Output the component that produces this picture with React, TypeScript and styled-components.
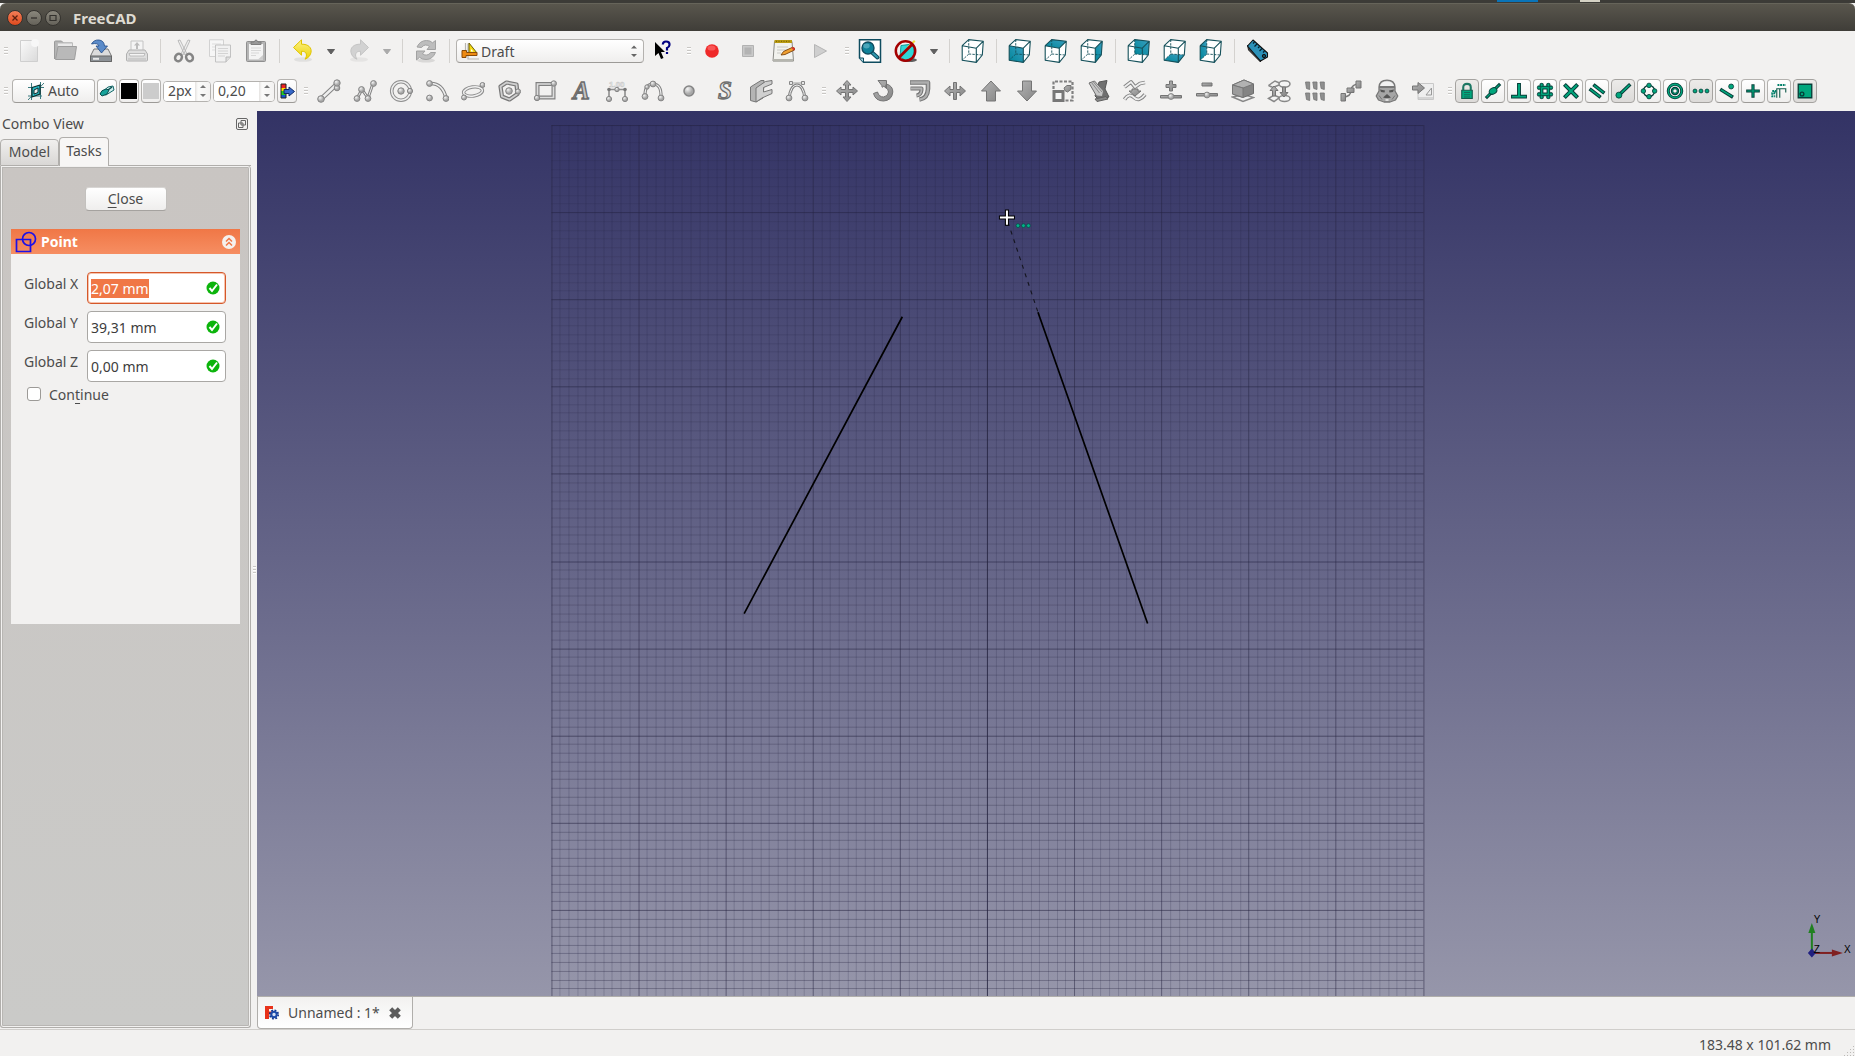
import React, { useEffect, useRef, useState } from 'react';
import styled, { createGlobalStyle, css } from 'styled-components';

const GlobalStyle = createGlobalStyle`
  * { box-sizing: border-box; }
  body { margin: 0; background: #f2f1f0; }
  body, button, input, select { font-family: "Noto Sans", "Open Sans", sans-serif; font-size: 14px; color: #4c4c4c; }
  button { padding: 0; border: 0; background: none; }
  svg { display: block; flex: none; }
`;

/* ---------- window frame ---------- */

const Window = styled.div`
  display: flex;
  flex-direction: column;
  height: 100vh;
  overflow: hidden;
`;
const DesktopStrip = styled.div`
  flex: none;
  display: flex;
  justify-content: flex-end;
  height: 3px;
  padding-right: 255px;
  background: #3c3b37;
`;
const StripMark = styled.span<{ $w: number; $c: string; $gap: number }>`
  width: ${p => p.$w}px;
  height: 2px;
  margin-right: ${p => p.$gap}px;
  background: ${p => p.$c};
`;
const TitleBar = styled.header`
  flex: none;
  display: flex;
  align-items: center;
  gap: 3px;
  height: 28px;
  padding-left: 7px;
  border-top: 1px solid #66645a;
  border-radius: 6px 6px 0 0;
  background: linear-gradient(#59564d, #3f3d38);
`;
const WindowButton = styled.button<{ $close?: boolean }>`
  display: grid;
  place-items: center;
  width: 16px;
  height: 16px;
  border: 1px solid #35332f;
  border-radius: 8px;
  background: ${p => (p.$close ? 'linear-gradient(#f37e58, #de4a1e)' : 'linear-gradient(#8a877c, #65625a)')};
`;
const Title = styled.h1`
  margin: 0 0 0 9px;
  font-size: 15px;
  line-height: 20px;
  font-weight: 700;
  color: #dfdbd2;
`;

/* ---------- toolbars ---------- */

const ToolbarRow = styled.div`
  flex: none;
  display: flex;
  align-items: center;
  gap: 3px;
  height: 40px;
`;
const Group = styled.div<{ $gap?: number; $indent?: number }>`
  display: flex;
  align-items: center;
  gap: ${p => p.$gap ?? 0}px;
  padding-left: ${p => p.$indent ?? 0}px;
`;
const Handle = styled.span`
  flex: none;
  width: 11px;
  height: 8px;
  border: solid transparent;
  border-width: 0 3px 0 4px;
  background: repeating-linear-gradient(#c9c7c4 0 1px, #fff 1px 2px, transparent 2px 3px) padding-box;
`;
const Separator = styled.span`
  width: 1px;
  height: 24px;
  margin: 0 5px;
  background: #d4d2cf;
`;
const ToolButton = styled.button`
  display: grid;
  place-items: center;
  width: 36px;
  height: 32px;
`;
const MenuArrow = styled.button`
  display: grid;
  place-items: center;
  width: 20px;
  height: 32px;
`;
const raised = css`
  border: 1px solid #b4b2af;
  border-bottom-color: #9c9a97;
  border-radius: 4px;
  background: linear-gradient(#fff, #efeeed);
`;
const PushButton = styled.button<{ $w: number; $down?: boolean }>`
  ${raised}
  display: flex;
  align-items: center;
  justify-content: center;
  gap: 4px;
  width: ${p => p.$w}px;
  height: 24px;
  line-height: 20px;
  ${p => p.$down && css`background: linear-gradient(#ecebe9, #dcdad8); border-color: #a5a3a0;`}
`;
const Swatch = styled.span<{ $c: string }>`
  width: 16px;
  height: 16px;
  background: ${p => p.$c};
`;
const WorkbenchBox = styled.label`
  ${raised}
  display: flex;
  align-items: center;
  width: 188px;
  height: 24px;
  margin-left: 1px;
  padding: 0 5px 0 4px;
`;
const WorkbenchSelect = styled.select`
  flex: 1;
  min-width: 0;
  height: 20px;
  padding: 0;
  border: 0;
  appearance: none;
  background: transparent;
  outline: 0;
`;
const SpinBox = styled.div<{ $w: number }>`
  display: flex;
  width: ${p => p.$w}px;
  height: 21px;
  border: 1px solid #b4b2af;
  border-radius: 4px;
  background: #fff;
  overflow: hidden;
`;
const SpinInput = styled.input`
  flex: 1;
  min-width: 0;
  width: 0;
  padding: 0 0 0 4px;
  border: 0;
  outline: 0;
  line-height: 18px;
`;
const Stepper = styled.div`
  display: grid;
  width: 15px;
  background: linear-gradient(90deg, #e4e2e0, #fbfbfa 3px, #f3f2f1);
`;
const StepButton = styled.button`
  display: grid;
  place-items: center;
`;

/* ---------- side panel ---------- */

const Workspace = styled.main`
  flex: 1;
  display: flex;
  min-height: 0;
`;
const Dock = styled.aside`
  flex: none;
  display: flex;
  flex-direction: column;
  width: 251px;
`;
const DockTitle = styled.div`
  display: flex;
  align-items: center;
  justify-content: space-between;
  height: 26px;
  padding: 0 3px 1px 2px;
  line-height: 20px;
`;
const Tabs = styled.div`
  display: flex;
  align-items: flex-end;
  height: 29px;
`;
const Tab = styled.button<{ $active?: boolean; $w: number }>`
  width: ${p => p.$w}px;
  height: ${p => (p.$active ? 29 : 27)}px;
  padding-bottom: 2px;
  border: 1px solid #b0aeab;
  border-bottom: ${p => (p.$active ? 0 : 1)}px solid #b0aeab;
  border-radius: 4px 4px 0 0;
  line-height: 20px;
  background: ${p => (p.$active ? '#f7f6f5' : 'linear-gradient(#f0efee, #d9d7d5)')};
`;
const TabRest = styled.span`
  flex: 1;
  border-bottom: 1px solid #b0aeab;
`;
const Pane = styled.section`
  flex: 1;
  margin-bottom: 1px;
  padding: 19px 8px;
  border: 1px solid #b0aeab;
  border-top: 0;
  border-radius: 0 3px 3px 3px;
  box-shadow: inset 0 0 0 1px #f2f1f0, inset 0 0 0 2px #b8b6b3;
  background: linear-gradient(#c9c5c2, #cacac8);
`;
const CloseRow = styled.div`
  display: flex;
  justify-content: center;
  padding: 2px 0 18px;
`;
const CloseButton = styled(PushButton)`
  display: block;
  border-color: #d8d6d4 #c3c1be #a5a29f;
`;
const Mnemonic = styled.u`
  text-underline-offset: 3px;
`;
const TaskBox = styled.div`
  margin: 0 2px;
  height: 395px;
  background: #f2f1f0;
`;
const TaskHeader = styled.div`
  display: flex;
  align-items: center;
  gap: 4px;
  height: 25px;
  padding: 0 4px;
  background: linear-gradient(#f07746, #f68e62);
`;
const TaskTitle = styled.h2`
  flex: 1;
  margin: 0;
  font-size: 14px;
  line-height: 20px;
  color: #fff;
`;
const TaskBody = styled.form`
  display: grid;
  gap: 7px;
  padding: 18px 14px 0 12px;
`;
const Field = styled.div`
  display: flex;
  justify-content: space-between;
`;
const FieldLabel = styled.label`
  line-height: 20px;
  padding: 2px 1px;
`;
const FieldBox = styled.div<{ $focus?: boolean }>`
  display: flex;
  align-items: center;
  width: 139px;
  height: 32px;
  padding: 0 5px 0 3px;
  border: 1px solid #a9a7a4;
  border-radius: 4px;
  background: #fff;
  ${p => p.$focus && css`border-color: #d5582a; box-shadow: inset 0 0 0 1px #f6c3ad;`}
`;
const FieldInput = styled.input`
  flex: 1;
  min-width: 0;
  padding: 0;
  border: 0;
  outline: 0;
  background: transparent;
  color: #3c3c3c;
  &::selection { background: #f07746; color: #fff; }
`;
const CheckRow = styled.label`
  display: flex;
  align-items: center;
  gap: 8px;
  height: 20px;
  margin-top: -5px;
  padding-left: 4px;
`;
const Check = styled.input`
  appearance: none;
  width: 14px;
  height: 14px;
  margin: 0;
  border: 1px solid #9c9a97;
  border-radius: 3px;
  background: #fff;
`;
const Splitter = styled.div`
  flex: none;
  display: grid;
  place-items: center;
  width: 6px;
`;
const SplitterGrip = styled.span`
  width: 3px;
  height: 8px;
  background: repeating-linear-gradient(#c9c7c4 0 1px, #fff 1px 2px, transparent 2px 3px);
`;

/* ---------- document area ---------- */

const DocumentArea = styled.section`
  flex: 1;
  display: flex;
  flex-direction: column;
  min-width: 0;
`;
const Viewport = styled.div`
  flex: 1;
  min-height: 0;
  border-bottom: 1px solid #b0aeab;
  background: linear-gradient(#333365, #9696aa);
`;
const DocTabs = styled.div`
  display: flex;
  height: 32px;
`;
const DocTab = styled.div`
  display: flex;
  align-items: center;
  width: 156px;
  padding: 0 10px 0 7px;
  border: 1px solid #b0aeab;
  border-top: 0;
  border-radius: 0 0 4px 4px;
  background: linear-gradient(#f2f1f0, #fff);
`;
const DocName = styled.button`
  flex: 1;
  padding-left: 9px;
  text-align: left;
  line-height: 20px;
`;
const StatusBar = styled.footer`
  flex: none;
  display: flex;
  align-items: center;
  justify-content: flex-end;
  gap: 12px;
  height: 27px;
  padding: 4px 1px 0 0;
  border-top: 1px solid #d0cecb;
  line-height: 20px;
`;
const SizeGrip = styled.span`
  align-self: flex-end;
  width: 11px;
  height: 11px;
  background: radial-gradient(#bcbab7 1px, transparent 1px) 0 0 / 3px 3px;
  clip-path: polygon(100% 0, 100% 100%, 0 100%);
`;

/* ---------- icon helpers ---------- */

type P = { children?: React.ReactNode; size?: number };
const Icon = ({ children, size = 24 }: P) => (
  <svg width={size} height={size} viewBox="0 0 24 24" fill="none" aria-hidden="true">{children}</svg>
);
const Glyph = styled.svg`
  overflow: visible;
`;
const Ball = ({ x, y, r = 2.9 }: { x: number; y: number; r?: number }) => (
  <circle cx={x} cy={y} r={r} fill="url(#ball)" stroke="#858585" strokeWidth="1" />
);
const Tube = ({ d, w = 3.6 }: { d: string; w?: number }) => (
  <>
    <path d={d} stroke="#848484" strokeWidth={w} strokeLinejoin="round" />
    <path d={d} stroke="#efefef" strokeWidth={w - 2} strokeLinejoin="round" />
  </>
);
const Solid = ({ d }: { d: string }) => <path d={d} fill="url(#steel)" stroke="#747474" strokeWidth="1" strokeLinejoin="round" />;

const Defs = () => (
  <svg width="0" height="0" style={{ position: 'absolute' }} aria-hidden="true">
    <defs>
      <radialGradient id="ball" cx=".35" cy=".3"><stop offset="0" stopColor="#f4f4f4" /><stop offset="1" stopColor="#a8a8a8" /></radialGradient>
      <linearGradient id="steel" x1="0" y1="0" x2="1" y2="1"><stop offset="0" stopColor="#b4b4b4" /><stop offset="1" stopColor="#858585" /></linearGradient>
      <linearGradient id="pale" x1="0" y1="0" x2="1" y2="1"><stop offset="0" stopColor="#fafafa" /><stop offset="1" stopColor="#dadada" /></linearGradient>
      <linearGradient id="teal" x1="1" y1="0" x2="0" y2="1"><stop offset="0" stopColor="#3a9fc0" /><stop offset="1" stopColor="#00869a" /></linearGradient>
      <linearGradient id="yellow" x1="0" y1="0" x2="0" y2="1"><stop offset="0" stopColor="#fbf08a" /><stop offset="1" stopColor="#edd400" /></linearGradient>
    </defs>
  </svg>
);

const A = '1.2,6.7', B = '15.3,9.2', C = '22.3,2.2', D = '7.7,.6', E = '1.2,21.2', F = '15.3,23.4', G = '21.3,16', H = '7.8,15';
const FACES = {
  front: [A, B, F, E], top: [A, B, C, D], right: [B, C, G, F],
  rear: [D, C, G, H], bottom: [E, F, G, H], left: [A, D, H, E],
};
const Cube = ({ face }: { face?: keyof typeof FACES }) => (
  <Icon>
    <path d={`M${A}L${B}L${F}L${E}ZM${A}L${D}L${C}L${G}L${F}L${B}Z`} fill="#fff" />
    {face && <path d={`M${FACES[face].join('L')}Z`} fill="url(#teal)" />}
    <path d={`M${D}L${H}L${E}M${H}L${G}`} stroke="#15505a" strokeWidth=".9" strokeDasharray="2.4 1.2" />
    <path d={`M${A}L${B}L${F}L${E}ZM${A}L${D}L${C}L${G}L${F}M${B}L${C}`} stroke="#15505a" strokeWidth="1.1" strokeLinejoin="round" />
  </Icon>
);

const Curved = ({ c, s }: { c: string; s: string }) => (
  <Icon>
    <ellipse cx="12" cy="20.5" rx="9" ry="2.3" fill="#000" opacity=".07" />
    <path d="M2.500 8.500L10.500 .8V5.200C17.500 5 21 9 20 13.500C19.300 17 17 19 14 20.200C16.500 16.500 16 12.200 10.500 12.200V16.200Z" fill={c} stroke={s} strokeLinejoin="round" />
  </Icon>
);
const Triangle = ({ c }: { c: string }) => (
  <svg width="10" height="8" viewBox="0 0 10 8" aria-hidden="true"><path d="M1.500 2.500H8.500L5 7Z" fill={c} stroke={c} strokeLinejoin="round" /></svg>
);
const Steps = () => (
  <svg width="8" height="14" viewBox="0 0 8 14" aria-hidden="true"><path d="M1 4.500L4 1.500L7 4.500ZM1 10L4 13L7 10Z" fill="#666" /></svg>
);

const icons: Record<string, React.ReactNode> = {
  New: <Icon><path d="M3.500 1.500H20.500V22.500H3.500Z" fill="url(#pale)" stroke="#cfcfcf" /><circle cx="18" cy="4" r="4" fill="#f7f7f7" /></Icon>,
  Open: <Icon><path d="M1.500 20V3Q1.500 2 2.500 2H8.500L10.500 4H19.500V12" fill="#b5b5b5" stroke="#9a9a9a" /><path d="M4.500 4H19.500V14H4.500Z" fill="#e9e9e9" stroke="#bbb" /><path d="M5 7.500H23.500L21.500 20.500H2.500Z" fill="#b9b9b9" stroke="#9d9d9d" strokeLinejoin="round" /></Icon>,
  Save: <Icon><path d="M5 10H19L22.500 17V22.500H1.500V17Z" fill="#dcdcdc" stroke="#777" strokeLinejoin="round" /><path d="M1.500 17H22.500V22.500H1.500Z" fill="#8d9297" stroke="#666" /><path d="M4 19.800H10" stroke="#e8e8e8" strokeWidth="2" /><path d="M2.500 5Q5 .5 10 1Q15 1.500 15.500 7H18.500L12.500 14L7 7H10Q9 3.500 2.500 5Z" fill="#5b8bc9" stroke="#204a87" strokeWidth=".8" /></Icon>,
  Print: <Icon><path d="M6 2H18V13H6Z" fill="#f4f4f4" stroke="#c4c4c4" /><path d="M12 3L15 6.500H13V10H11V6.500H9Z" fill="#bbb" /><path d="M4 11H20L22.500 15V21Q22.500 22 21.500 22H2.500Q1.500 22 1.500 21V15Z" fill="#dedede" stroke="#b0b0b0" /><path d="M4 14.500H20L19 17H5Z" fill="#f5f5f5" stroke="#bbb" /><path d="M3 20H21" stroke="#bbb" /></Icon>,
  Cut: <Icon><path d="M6 1.500L8 1L15 15L12.500 15.500ZM18 1.500L16 1L9 15L11.500 15.500Z" fill="#eee" stroke="#adadad" strokeWidth=".8" /><ellipse cx="6.500" cy="18.500" rx="3.300" ry="3.800" stroke="#858585" strokeWidth="2.500" transform="rotate(30 6.500 18.500)" /><ellipse cx="17.500" cy="18.500" rx="3.300" ry="3.800" stroke="#858585" strokeWidth="2.500" transform="rotate(-30 17.500 18.500)" /></Icon>,
  Copy: <Icon><path d="M1.500 .8H15.500V17.500H1.500Z" fill="#f6f6f6" stroke="#d2d2d2" /><path d="M4 5H13M4 8H13M4 11H8" stroke="#ddd" /><path d="M7.500 6H22.500V18L18 23H7.500Z" fill="#f1f1f1" stroke="#c2c2c2" /><path d="M10 9.500H20M10 12H20M10 14.500H20M10 17H17" stroke="#d3d3d3" /><path d="M22.500 18H18V23" fill="#ddd" stroke="#b8b8b8" /></Icon>,
  Paste: <Icon><rect x="2.500" y="2.500" width="19" height="20" rx="1" fill="#b5b5b5" stroke="#8f8f8f" /><path d="M5 5H19V20.500H5Z" fill="#f4f4f4" /><path d="M7 9H17M7 11.500H17M7 14H15M7 16.500H12" stroke="#d8d8d8" /><path d="M14 20.500L19 16V20.500Z" fill="#ccc" /><path d="M7 5.500V3H10Q12 -1 14 3H17V5.500Z" fill="#999" stroke="#7e7e7e" /></Icon>,
  Undo: <Curved c="url(#yellow)" s="#e0c400" />,
  Redo: <Icon><g transform="matrix(-1 0 0 1 24 0)"><ellipse cx="12" cy="20.500" rx="9" ry="2.300" fill="#000" opacity=".05" /><path d="M2.500 8.500L10.500 .8V5.200C17.500 5 21 9 20 13.500C19.300 17 17 19 14 20.200C16.500 16.500 16 12.200 10.500 12.200V16.200Z" fill="#d2d2d2" stroke="#c4c4c4" /></g></Icon>,
  Refresh: <Icon><ellipse cx="12" cy="21.500" rx="9" ry="2" fill="#000" opacity=".1" /><path d="M3 8Q6 1.500 12.500 1.500Q16.500 1.500 18.500 3.800L21.500 1.500V10.500H13L15.500 7.500Q11 4 7.500 8.500Z" fill="#bdbdbd" stroke="#a2a2a2" /><path d="M21.500 13.500Q18.500 20.500 12 20.500Q8 20.500 5.500 18.300L2.500 21V12H11L8.500 14.800Q13 18 16.800 13.500Z" fill="#bdbdbd" stroke="#a2a2a2" /></Icon>,
  "What's this?": <Icon><path d="M5 3V17L8.500 14L11 20L13.500 19L11 13H15Z" fill="#000" /><path d="M12.800 5.500Q13 2.500 16 2.500Q19.800 2.500 19.500 6Q19.300 8.200 17 9V11.500M17 13V15" stroke="#000080" strokeWidth="2.200" /></Icon>,
  Record: <Icon><circle cx="12" cy="12" r="6.800" fill="#ef2929" /><ellipse cx="11.500" cy="9" rx="4" ry="2.600" fill="#f77" opacity=".6" /></Icon>,
  Stop: <Icon><path d="M6.500 6.500H17.500V17.500H6.500Z" fill="#c9c9c9" stroke="#b2b2b2" /><path d="M8.500 8.500H15.500V15.500H8.500Z" fill="#b3b3b3" /></Icon>,
  Macros: <Icon><path d="M2.500 2.500H20L21.500 22H1Z" fill="#f2f2ee" stroke="#8a8a85" /><path d="M2.500 1H20V4H2.500Z" fill="#b99b12" /><path d="M4 2.300H19" stroke="#6e5b06" strokeDasharray="1 1.500" /><path d="M5 8H16M5 11H15M5 14H9" stroke="#c8c8c4" /><path d="M1.200 20H21.300V22.500H1.200Z" fill="#b5b5ae" /><path d="M9 16L11.500 12.500L20.500 8.300Q23.500 8.500 22.500 11L13 15.500Z" fill="#f0a030" stroke="#7c430a" strokeWidth=".9" /><path d="M20.500 8.300Q23.500 8.500 22.500 11L21.500 11.500L19.500 8.800Z" fill="#d33" /></Icon>,
  Run: <Icon><path d="M6.500 5.500L18.500 12L6.500 18.500Z" fill="#cfcfcf" stroke="#b5b5b5" strokeLinejoin="round" /></Icon>,
  'Fit all': <Icon><path d="M1.500 .8H22.500V23.200H5.500L1.500 19Z" fill="#fff" stroke="#0f4c5f" strokeWidth="1.500" /><path d="M1.500 19H5.500V23.200" fill="#9fd0dc" stroke="#0f4c5f" /><path d="M14 13.500L19.500 18.500" stroke="#0f4c5f" strokeWidth="4" strokeLinecap="round" /><path d="M14.500 14L19.300 18.300" stroke="#2f97ae" strokeWidth="2" strokeLinecap="round" /><circle cx="10" cy="9" r="6" fill="#0e8199" stroke="#0f4c5f" strokeWidth="1.400" /><ellipse cx="8.500" cy="7" rx="3.200" ry="2.400" fill="#64b6c8" opacity=".7" /></Icon>,
  'Draw style': <Icon><ellipse cx="15" cy="21" rx="8" ry="2" fill="#222" opacity=".7" /><path d="M7 6.500L15 5.500L20 8V19L12 21.500L6 18Z" fill="#2fd6d6" stroke="#139a9a" /><path d="M13 8L20 1L21.500 2.500L14 10Z" fill="#f2df3a" /><circle cx="11.500" cy="12" r="9.700" stroke="#a40000" strokeWidth="2.500" /><path d="M18.300 5.200L4.700 18.800" stroke="#a40000" strokeWidth="2.800" /></Icon>,
  Isometric: <Cube />, Front: <Cube face="front" />, Top: <Cube face="top" />, Right: <Cube face="right" />,
  Rear: <Cube face="rear" />, Bottom: <Cube face="bottom" />, Left: <Cube face="left" />,
  Measure: <Icon><path d="M1.500 6L14 19L14.500 23L2.500 11Z" fill="#444" stroke="#222" /><path d="M7 1L21.500 14V18L14.500 22L1.500 7Z" fill="#2c91b8" stroke="#111" strokeWidth="1.100" strokeLinejoin="round" /><path d="M8.500 3L7 4.500M11 5L8.500 7.500M13.500 7.500L12 9M16 9.500L13.500 12M18.500 12L17 13.500" stroke="#041f2a" strokeWidth="1.200" /><circle cx="18" cy="17" r="1.700" fill="#0f4c5f" stroke="#111" /></Icon>,

  Line: <Icon><Tube d="M4 20L20 5" w={4.500} /><Ball x={4} y={20} r={3.300} /><Ball x={20} y={9} r={2.800} /><Ball x={20} y={4} r={3.200} /></Icon>,
  Wire: <Icon><Tube d="M4 19.500L9 10.500L15 19L20 4.500" w={3} /><Ball x={4} y={19.500} /><Ball x={8.500} y={10.500} /><Ball x={15} y={19.500} /><Ball x={20.500} y={4.500} /></Icon>,
  Circle: <Icon><circle cx="12" cy="12" r="9.300" stroke="#8e8e8e" strokeWidth="3.600" /><circle cx="12" cy="12" r="9.300" stroke="#eee" strokeWidth="1.600" /><Ball x={12} y={12} r={3.200} /><Ball x={21} y={12} r={2.600} /></Icon>,
  Arc: <Icon><Tube d="M5 4.500Q17.500 4 21 19" /><Ball x={4.500} y={4.500} /><Ball x={4.500} y={19} /><Ball x={21} y={19.500} /></Icon>,
  Ellipse: <Icon><ellipse cx="12" cy="12.500" rx="9.500" ry="4.500" stroke="#8e8e8e" strokeWidth="3.400" transform="rotate(-8 12 12.500)" /><ellipse cx="12" cy="12.500" rx="9.500" ry="4.500" stroke="#f0f0f0" strokeWidth="1.500" transform="rotate(-8 12 12.500)" /><Ball x={21.500} y={6} r={2.500} /><Ball x={3} y={18.500} r={2.500} /></Icon>,
  Polygon: <Icon><path d="M9.500 3.500L19.500 5.500L20.500 15L12.500 20.500L5 17.500L3.500 7.500Z" stroke="#777" strokeWidth="4.200" strokeLinejoin="round" /><path d="M9.500 3.500L19.500 5.500L20.500 15L12.500 20.500L5 17.500L3.500 7.500Z" stroke="#cfcfcf" strokeWidth="1.800" strokeLinejoin="round" /><Ball x={12} y={12} r={3.300} /><Ball x={21} y={12.500} r={2.600} /></Icon>,
  Rectangle: <Icon><path d="M4.500 5H20.500V18.500H4.500Z" stroke="#808080" strokeWidth="4" /><path d="M4.500 5H20.500V18.500H4.500Z" stroke="#ddd" strokeWidth="1.700" /><Ball x={20.800} y={4.500} r={2.700} /><Ball x={4} y={19} r={2.700} /></Icon>,
  Text: <Glyph width="24" height="24" viewBox="0 0 24 24" aria-hidden="true"><text x="4" y="20" fontFamily="Liberation Serif, serif" fontStyle="italic" fontWeight="700" fontSize="25" fill="#c4c4c4" stroke="#6b6b6b" strokeWidth="1.300">A</text></Glyph>,
  Dimension: <Icon><text x="4" y="8" fontFamily="Liberation Sans, sans-serif" fontWeight="700" fontSize="8" fill="#f8f8f8" stroke="#c2c2c2" strokeWidth=".5">1.00</text><path d="M4 10.500V19M20 10.500V19M4 10.500H20" stroke="#8e8e8e" strokeWidth="1.600" /><Ball x={12} y={10.500} r={2.200} /><Ball x={4} y={20} r={2.600} /><Ball x={20} y={20} r={2.600} /><circle cx="4" cy="10.500" r="1.800" fill="#777" /><circle cx="20" cy="10.500" r="1.800" fill="#777" /></Icon>,
  BSpline: <Icon><Tube d="M4 18Q3.500 5 12 5Q20.500 5 20 18" w={3.200} /><Ball x={12} y={5} /><Ball x={4} y={17.500} /><Ball x={20} y={19} /><Ball x={6} y={8} r={2.200} /></Icon>,
  Point: <Icon><circle cx="12" cy="12" r="5" fill="url(#ball)" stroke="#858585" strokeWidth="1.500" /></Icon>,
  'Shape string': <Glyph width="24" height="24" viewBox="0 0 24 24" aria-hidden="true"><text x="5" y="20" fontFamily="Liberation Serif, serif" fontStyle="italic" fontSize="25" fontWeight="700" fill="#e4e4e4" stroke="#6f6f6f" strokeWidth="1.300">S</text></Glyph>,
  Facebinder: <Icon><path d="M1.500 8L12 1.500H15V5L14 19L7 23L1.500 21.500Z" fill="#b4b4b4" stroke="#777" strokeLinejoin="round" /><path d="M7 9L16.500 2.500L23 1.500V5L14.500 8.500V13L23 10.500V14.500L13 19L7 23Z" fill="#cfcfcf" stroke="#777" strokeLinejoin="round" /></Icon>,
  Bezier: <Icon><path d="M4 4H20" stroke="#bbb" strokeWidth="1.500" /><Tube d="M4 19Q6 6 12 6Q18 6 20 19" w={3} /><path d="M4.500 2.500H7.500V5.500H4.500ZM16.500 2.500H19.500V5.500H16.500Z" fill="#e6e6e6" stroke="#888" /><Ball x={4} y={19} /><Ball x={20} y={19} /></Icon>,

  Move: <Icon><Solid d="M12 1.500L16 6H13.500V10.500H18V8L22.500 12L18 16V13.500H13.500V18H16L12 22.500L8 18H10.500V13.500H6V16L1.500 12L6 8V10.500H10.500V6H8Z" /></Icon>,
  Rotate: <Icon><Solid d="M7 1.500H15.500V9.500L12.800 7.200Q10.500 9.500 11 6.800L7 1.500ZM15.500 5Q22 7 21.800 13Q21 21.500 12.500 22Q4.500 22 2.500 14.500L6.500 13Q8 18 12.500 18Q17 17.500 17.500 13Q17.500 9.500 14 8Z" /></Icon>,
  Offset: <Icon><path d="M3 3.500H21V10Q20.500 19.500 12.500 20.500" stroke="#747474" strokeWidth="4.600" strokeLinejoin="round" /><path d="M3.500 3.500H21V10Q20.500 19.500 13 20.500" stroke="#aeaeae" strokeWidth="2.400" /><path d="M3.500 9.500H14.500V11Q14 16 9.500 16.500" stroke="#747474" strokeWidth="4" strokeLinejoin="round" /><path d="M4 9.500H14.500V11Q14 16 10 16.500" stroke="#b4b4b4" strokeWidth="1.800" /></Icon>,
  Trimex: <Icon><Solid d="M1.500 12L7 7V10.500H10.500V3.500H13.500V10.500H17V7L22.500 12L17 17V13.500H13.500V20.500H10.500V13.500H7V17Z" /></Icon>,
  Upgrade: <Icon><Solid d="M12 2L21.500 12H16.500V22H7.500V12H2.500Z" /></Icon>,
  Downgrade: <Icon><Solid d="M12 22L2.500 12H7.500V2H16.500V12H21.500Z" /></Icon>,
  Scale: <Icon><path d="M2.500 10V2.500H21.500V21.500H14" stroke="#808080" strokeWidth="2.200" strokeDasharray="3 1.500" /><path d="M3 12.500H12V21.500H3Z" fill="#f5f5f5" stroke="#777" strokeWidth="3" /><Solid d="M13 9L16 6.500H20V10.500L16.500 13Q13.500 12.500 13 9Z" /></Icon>,
  Edit: <Icon><path d="M12 3L20 1.500L18 10L22 18L12 21L8 17Z" fill="#707070" stroke="#555" /><path d="M2 4L7.500 2L16.500 12L15.500 17.500L9.500 17Z" fill="#c6c6c6" stroke="#6f6f6f" strokeLinejoin="round" /><path d="M4.500 3.500L12.500 14M6 2.500L15 13" stroke="#8a8a8a" /><path d="M8 20L19 17.500L21 20L10 22.500Z" fill="#888" stroke="#606060" /></Icon>,
  'Wire to BSpline': <Icon><Tube d="M1.500 8L8 3L12 8L17 4.500L22 3.500" w={3.800} /><Tube d="M1.500 20.500Q6 13.500 11 18.500T22 15.500" w={3.800} /><Solid d="M9 10H15V12H18L12 17L6 12H9Z" /></Icon>,
  'Add point': <Icon><Solid d="M10.500 2H13.500V5.500H17V8.500H13.500V12H10.500V8.500H7V5.500H10.500Z" /><Solid d="M1.500 16.500H22.500V19H1.500Z" /><Ball x={12} y={17.500} /></Icon>,
  'Remove point': <Icon><Solid d="M7 4H17V7H7Z" /><Solid d="M1.500 14.500H22.500V17H1.500Z" /><Ball x={12} y={16} /></Icon>,
  'Shape 2D view': <Icon><path d="M1.500 18L13 15.500L22.500 18.500L12 22.500Z" fill="#eee" stroke="#888" strokeWidth="1.500" /><path d="M1.500 6L13 1L22.500 5V14.500L12 18.500L1.500 15Z" fill="#848484" stroke="#6b6b6b" /><path d="M1.500 6L13 1L22.500 5L12 9Z" fill="#b2b2b2" stroke="#777" /><path d="M1.500 6L12 9V18.500L1.500 15Z" fill="#9c9c9c" stroke="#777" /></Icon>,
  'Draft to sketch': <Icon><path d="M1.500 6.500L8 2L12.500 4" stroke="#888" strokeWidth="1.500" /><path d="M1.500 6.500L6 8.500L12 6" stroke="#888" strokeWidth="1.500" /><ellipse cx="17.500" cy="5" rx="5.500" ry="3.200" fill="#f4f4f4" stroke="#888" strokeWidth="1.500" /><path d="M1.500 19.500L7 16L12.500 18.500L7 22.500Z" fill="#f4f4f4" stroke="#888" strokeWidth="1.500" /><ellipse cx="17.500" cy="19.500" rx="5.500" ry="3" fill="#f4f4f4" stroke="#888" strokeWidth="1.500" /><Solid d="M7 7L11 11.500H8.500V17H5.500V11.500H3ZM17 18L13 13.500H15.500V8H18.500V13.500H21Z" /></Icon>,
  Array: <Icon>{[2.500, 9.800, 17.100].map(x => [3, 14].map(y => <path key={`${x}${y}`} d={`M${x} ${y}H${x + 4.200}V${y + 7.500}L${x + 1} ${y + 6.500}Z`} fill="#8f8f8f" stroke="#737373" strokeWidth=".8" />))}</Icon>,
  'Path array': <Icon><path d="M4 18Q12 18 12 11Q13 5 20 5" stroke="#777" strokeWidth="1.500" /><Solid d="M2 14.500H6.500V22H2Z" /><Solid d="M8 9H15V13.500H8Z" /><Solid d="M17 2H22V9H17Z" /></Icon>,
  Clone: <Icon><path d="M12 1.200Q19.500 1.200 20 8V12L22.800 17L20.500 21L15 23H9L3.500 21L1.200 17L4 12V8Q4.500 1.200 12 1.200Z" fill="#a6a6a6" stroke="#777" strokeWidth="1.300" strokeLinejoin="round" /><path d="M5 7Q6 2.200 12 2.200Q18 2.200 19 7Z" fill="#f2f2f2" /><path d="M4.500 8H19.500" stroke="#5f5f5f" strokeWidth="1.300" /><path d="M5 10.500L10 11.500L9.500 13.500L6 13ZM19 10.500L14 11.500L14.500 13.500L18 13ZM8 18.500L12 15L16 18.500L14 19H10Z" fill="#555" /><path d="M4 16.500L7 20.500M20 16.500L17 20.500" stroke="#777" /><path d="M10.500 21H13.500" stroke="#eee" strokeWidth="1.500" /></Icon>,
  Drawing: <Icon><path d="M7 4.500H22.500V20.500H7Z" fill="#eee" stroke="#c8c8c8" /><path d="M15 16L20.500 9V16Z" stroke="#999" /><path d="M7 19H22" stroke="#bbb" /><Solid d="M1.500 7H7V3.500L13.500 9L7 14.500V11H1.500Z" /></Icon>,
};

/* snap markers: dark outline with a green core */
const Snap = ({ d, w = 3.500 }: { d: string; w?: number }) => (
  <>
    <path d={d} stroke="#063f39" strokeWidth={w + 1.200} strokeLinecap="square" />
    <path d={d} stroke="#00a67c" strokeWidth={w - 1.400} strokeLinecap="square" />
  </>
);
const Dot = ({ x, y, r = 2.200 }: { x: number; y: number; r?: number }) => <circle cx={x} cy={y} r={r} fill="#00a67c" stroke="#063f39" strokeWidth="1.100" />;

const snaps: [string, boolean, React.ReactNode][] = [
  ['Snap lock', true, <Icon size={18}><path d="M7 11V7Q7 2.500 12 2.500Q17 2.500 17 7V11" stroke="#1c7763" strokeWidth="2.800" /><path d="M5 11H19V22H5Z" fill="#00a67c" stroke="#145c4d" strokeWidth="1.500" /><path d="M8 14H16M8 17H16M8 20H16" stroke="#146b58" strokeWidth="1.300" /></Icon>],
  ['Snap midpoint', false, <Icon size={18}><Snap d="M4 20L20 4" w={3} /><ellipse cx="12" cy="12" rx="5.500" ry="4" fill="#00a67c" stroke="#063f39" strokeWidth="1.300" transform="rotate(-30 12 12)" /></Icon>],
  ['Snap perpendicular', false, <Icon size={18}><Snap d="M12 4V17M4 19.500H20" w={4} /><path d="M12 4V19" stroke="#00a67c" strokeWidth="2.500" /></Icon>],
  ['Snap grid', false, <Icon size={18}><Snap d="M7.500 4.500V19.500M16.500 4.500V19.500M4.500 7.500H19.500M4.500 16.500H19.500" w={3.500} /><Dot x={4} y={7.500} /><Dot x={20} y={7.500} /><Dot x={4} y={16.500} /><Dot x={20} y={16.500} /><Dot x={7.500} y={4} /><Dot x={16.500} y={4} /><Dot x={7.500} y={20} /><Dot x={16.500} y={20} /></Icon>],
  ['Snap intersection', false, <Icon size={18}><Snap d="M5 5L19 19M19 5L5 19" w={4} /></Icon>],
  ['Snap parallel', false, <Icon size={18}><Snap d="M9 5L20 13.500M4 10.500L15 19" /></Icon>],
  ['Snap endpoint', true, <Icon size={18}><Snap d="M7 17L20 4.500" /><Dot x={6.500} y={17.500} r={4} /></Icon>],
  ['Snap angle', false, <Icon size={18}><circle cx="12" cy="12" r="7.500" stroke="#063f39" strokeWidth="1.800" /><Dot x={12} y={4.500} r={3} /><Dot x={12} y={19.500} r={3} /><Dot x={4.500} y={12} r={3} /><Dot x={19.500} y={12} r={3} /></Icon>],
  ['Snap center', false, <Icon size={18}><circle cx="12" cy="12" r="9" stroke="#063f39" strokeWidth="4" /><circle cx="12" cy="12" r="9" stroke="#00a67c" strokeWidth="1.700" /><circle cx="12" cy="12" r="4" stroke="#063f39" strokeWidth="3.200" /><circle cx="12" cy="12" r="3.500" stroke="#00a67c" strokeWidth="1" /></Icon>],
  ['Snap extension', true, <Icon size={18}><Dot x={4} y={12} r={2.600} /><Dot x={12} y={12} r={2.600} /><Dot x={20} y={12} r={2.600} /></Icon>],
  ['Snap near', false, <Icon size={18}><Snap d="M5 11L18 19" /><Dot x={17.500} y={6} r={3.300} /></Icon>],
  ['Snap ortho', false, <Icon size={18}><Snap d="M12 5V19M5 12H19" w={3} /></Icon>],
  ['Snap dimensions', false, <Icon size={18}><path d="M9 21V9H21V14M13 9V21" stroke="#145c4d" strokeWidth="1.500" /><path d="M10 4H21M3 12H7V15H3V19H7" stroke="#00806a" strokeWidth="2.500" strokeDasharray="2.500 1" /></Icon>],
  ['Snap working plane', true, <Icon size={18}><path d="M3 3H21V21H3Z" fill="#00a67c" stroke="#063f39" strokeWidth="1.800" /><circle cx="8" cy="16" r="2.500" stroke="#063f39" strokeWidth="1.800" /></Icon>],
];

const Tools = ({ names }: { names: string[] }) => (
  <>
    {names.map((n, i) => n === '|' ? <Separator key={i} />
      : n === 'v' || n === 'v-off' ? <MenuArrow key={i} aria-label="More"><Triangle c={n === 'v' ? '#5f5f5f' : '#aaa'} /></MenuArrow>
      : <ToolButton key={i} aria-label={n} title={n}>{icons[n]}</ToolButton>)}
  </>
);

const Spin = ({ label, value, width }: { label: string; value: string; width: number }) => (
  <SpinBox $w={width}>
    <SpinInput aria-label={label} defaultValue={value} />
    <Stepper>
      <StepButton aria-label={`Increase ${label}`}><svg width="6" height="4"><path d="M0 4L3 1L6 4Z" fill="#777" /></svg></StepButton>
      <StepButton aria-label={`Decrease ${label}`}><svg width="6" height="4"><path d="M0 0L3 3L6 0Z" fill="#777" /></svg></StepButton>
    </Stepper>
  </SpinBox>
);

const Valid = () => (
  <svg width="14" height="14" viewBox="0 0 14 14" fill="none" aria-hidden="true">
    <circle cx="7" cy="7" r="6.500" fill="#0cb40c" /><path d="M3.500 7L6 10L11 3.500" stroke="#fff" strokeWidth="2" />
  </svg>
);

const Scene = () => {
  const x0 = 295, y0 = 14, step = 8.71;
  const right = x0 + 100 * step;
  const lines = Array.from({ length: 101 }, (_, i) => i);
  return (
    <svg width="100%" height="100%" viewBox="0 0 1598 884" preserveAspectRatio="xMidYMid slice" fill="none">
      {lines.map(i => {
        const x = Math.floor(x0 + i * step), y = Math.round(y0 + i * step), major = i % 10 === 0;
        return (
          <g key={i} fill="#25233f">
            <rect x={x} y={y0} width="1" height="871" opacity={i === 50 ? 0.85 : major ? 0.5 : 0.2} />
            <rect x={x0} y={y} width={right - x0} height="1" opacity={major ? 0.55 : 0.12 + i * 0.002} />
          </g>
        );
      })}
      <path d="M645.500 205.500L487.500 502M781 201L890.500 512" stroke="#000" strokeWidth="1.700" />
      <path d="M751 111L781 201" stroke="#15151f" strokeWidth="1.100" strokeDasharray="4 5" />
      <path d="M750 98.500V114.500M742 106.500H758" stroke="#000" strokeWidth="4" />
      <path d="M750 99.500V113.500M743 106.500H757" stroke="#fff" strokeWidth="2" />
      <g fill="#00b488" stroke="#0a4a4a" strokeWidth=".8"><circle cx="761" cy="114.500" r="1.900" /><circle cx="766.500" cy="114.500" r="1.900" /><circle cx="771.500" cy="114.500" r="1.900" /></g>
      <path d="M1554 841V820" stroke="#208020" strokeWidth="2" /><path d="M1554 811L1557.500 821H1550.500Z" fill="#208020" />
      <path d="M1554 841H1575" stroke="#802020" strokeWidth="2" /><path d="M1585 841L1574 844.500V837.500Z" fill="#802020" />
      <path d="M1554 836.500L1558 841L1554 845.500L1550 841Z" fill="#202080" />
      <g fill="#000" fontFamily="Liberation Sans, sans-serif" fontSize="10"><text x="1556" y="811">Y</text><text x="1586" y="841">X</text><text x="1556" y="841">Z</text></g>
    </svg>
  );
};

export default function App() {
  const first = useRef<HTMLInputElement>(null);
  const [tab, setTab] = useState('Tasks');
  useEffect(() => { first.current?.focus(); first.current?.select(); }, []);
  return (
    <Window>
      <GlobalStyle />
      <Defs />
      <DesktopStrip><StripMark $w={41} $c="#0a74b8" $gap={42} /><StripMark $w={20} $c="#d5d2c4" $gap={0} /></DesktopStrip>
      <TitleBar>
        <WindowButton $close aria-label="Close window"><svg width="8" height="8"><path d="M1.500 1.500L6.500 6.500M6.500 1.500L1.500 6.500" stroke="#5a2010" strokeWidth="1.300" /></svg></WindowButton>
        <WindowButton aria-label="Minimize"><svg width="8" height="8"><path d="M1 4H7" stroke="#33312d" strokeWidth="1.300" /></svg></WindowButton>
        <WindowButton aria-label="Maximize"><svg width="8" height="8"><path d="M1 1.500H7V6.500H1Z" fill="none" stroke="#33312d" strokeWidth="1.200" /></svg></WindowButton>
        <Title>FreeCAD</Title>
      </TitleBar>

      <ToolbarRow>
        <Group>
          <Handle />
          <Tools names={['New', 'Open', 'Save', 'Print', '|', 'Cut', 'Copy', 'Paste', '|', 'Undo', 'v', 'Redo', 'v-off', '|', 'Refresh', '|']} />
          <WorkbenchBox>
            <svg width="20" height="18" viewBox="0 0 20 18" fill="none" aria-hidden="true">
              <path d="M4.500 1V10M7 1.500V17H18" stroke="#b9b6b0" strokeWidth="1.200" /><path d="M8 1V11H16Z" fill="#f4d90e" stroke="#6d5f08" /><path d="M10 7V9.500H12.500Z" fill="#fff" />
              <path d="M1 8.500H5.500V10.500H16V13.500H5V15.500H1Z" fill="#ee8a12" stroke="#8a4b06" />
            </svg>
            <WorkbenchSelect aria-label="Workbench" defaultValue="Draft"><option>Draft</option></WorkbenchSelect>
            <Steps />
          </WorkbenchBox>
          <Tools names={["What's this?"]} />
        </Group>
        <Group><Handle /><Tools names={['Record', 'Stop', 'Macros', 'Run']} /></Group>
        <Group><Handle /><Tools names={['Fit all', 'Draw style', 'v', '|', 'Isometric', '|', 'Front', 'Top', 'Right', '|', 'Rear', 'Bottom', 'Left', '|', 'Measure']} /></Group>
      </ToolbarRow>

      <ToolbarRow>
        <Group>
          <Handle />
          <Group $gap={2} $indent={1}>
            <PushButton $w={83}>
              <svg width="16" height="18" viewBox="0 0 16 18" fill="none" aria-hidden="true">
                <path d="M0 5.500H16M0 14H14M3.500 1V18M12.500 0V17M0 18L16 1" stroke="#3b7b80" /><path d="M4 5.500L12 3V12L4 15Z" fill="#2bb9c4" stroke="#0a2a2a" strokeWidth="1.200" /><path d="M6 8L10 6V10.500L6 12Z" fill="#eee" stroke="#0a2a2a" />
              </svg>
              Auto
            </PushButton>
            <PushButton $w={20} aria-label="Construction mode">
              <svg width="16" height="14" viewBox="0 0 16 14" aria-hidden="true"><path d="M1 10L9 3L14 2L15 6L7 11Z" fill="#cfeeee" stroke="#166" /><path d="M1 10Q2 6 7 5L10 6L8 10L3 12Z" fill="#18a39b" stroke="#0b4f4f" /><path d="M9 6L13 3" stroke="#0b4f4f" strokeWidth="1.500" /></svg>
            </PushButton>
            <PushButton $w={20} aria-label="Line colour"><Swatch $c="#000" /></PushButton>
            <PushButton $w={20} aria-label="Face colour"><Swatch $c="#ccc" /></PushButton>
            <Spin label="line width" value="2px" width={48} />
            <Spin label="text size" value="0,20" width={62} />
            <PushButton $w={20} aria-label="Apply style">
              <svg width="16" height="16" viewBox="0 0 16 16" aria-hidden="true"><path d="M2 1H7V5H2Z" fill="#e22" /><path d="M2 5H7V8H2Z" fill="#fd0" /><path d="M2 8H7V12H2Z" fill="#2c2" /><path d="M2 12H7V15H2Z" fill="#15c" /><path d="M2 1H7V15H2Z" fill="none" stroke="#222" /><path d="M5 6.500H10V4L15.500 8.500L10 13V10.500H5Z" fill="#3668c8" stroke="#102a66" /></svg>
            </PushButton>
          </Group>
        </Group>
        <Group><Handle /><Tools names={['Line', 'Wire', 'Circle', 'Arc', 'Ellipse', 'Polygon', 'Rectangle', 'Text', 'Dimension', 'BSpline', 'Point', 'Shape string', 'Facebinder', 'Bezier']} /></Group>
        <Group><Handle /><Tools names={['Move', 'Rotate', 'Offset', 'Trimex', 'Upgrade', 'Downgrade', 'Scale', 'Edit', 'Wire to BSpline', 'Add point', 'Remove point', 'Shape 2D view', 'Draft to sketch', 'Array', 'Path array', 'Clone', 'Drawing']} /></Group>
        <Group>
          <Handle />
          <Group $gap={2}>{snaps.map(([n, on, art]) => <PushButton key={n} $w={24} $down={on} aria-label={n} aria-pressed={on}>{art}</PushButton>)}</Group>
        </Group>
      </ToolbarRow>

      <Workspace>
        <Dock>
          <DockTitle>
            Combo View
            <button aria-label="Float panel"><svg width="12" height="12" viewBox="0 0 12 12" fill="none"><rect x=".5" y=".5" width="11" height="11" rx="1.500" stroke="#666" /><path d="M5 2.500H9.500V7H5ZM2.500 5H7V9.500H2.500Z" stroke="#666" /></svg></button>
          </DockTitle>
          <Tabs role="tablist">
            <Tab $w={59} role="tab" aria-selected={tab === 'Model'} $active={tab === 'Model'} onClick={() => setTab('Model')}>Model</Tab>
            <Tab $w={50} role="tab" aria-selected={tab === 'Tasks'} $active={tab === 'Tasks'} onClick={() => setTab('Tasks')}>Tasks</Tab>
            <TabRest />
          </Tabs>
          <Pane>
            <CloseRow><CloseButton $w={82}><Mnemonic>C</Mnemonic>lose</CloseButton></CloseRow>
            <TaskBox>
              <TaskHeader>
                <svg width="22" height="22" viewBox="0 0 22 22" fill="none" stroke="#1c10e8" strokeWidth="1.700" aria-hidden="true"><path d="M1.500 8.500H15.500V20.500H1.500Z" /><circle cx="14" cy="8" r="6.500" /></svg>
                <TaskTitle>Point</TaskTitle>
                <button aria-label="Collapse"><svg width="14" height="14" viewBox="0 0 14 14" fill="none"><circle cx="7" cy="7" r="7" fill="#f5f1ee" /><path d="M4 6.500L7 3.500L10 6.500M4 10.500L7 7.500L10 10.500" stroke="#f07746" strokeWidth="1.500" /></svg></button>
              </TaskHeader>
              <TaskBody>
                <Field><FieldLabel htmlFor="gx">Global X</FieldLabel><FieldBox $focus><FieldInput id="gx" ref={first} defaultValue="2,07 mm" /><Valid /></FieldBox></Field>
                <Field><FieldLabel htmlFor="gy">Global Y</FieldLabel><FieldBox><FieldInput id="gy" defaultValue="39,31 mm" /><Valid /></FieldBox></Field>
                <Field><FieldLabel htmlFor="gz">Global Z</FieldLabel><FieldBox><FieldInput id="gz" defaultValue="0,00 mm" /><Valid /></FieldBox></Field>
                <CheckRow><Check type="checkbox" /><span>Con<Mnemonic>t</Mnemonic>inue</span></CheckRow>
              </TaskBody>
            </TaskBox>
          </Pane>
        </Dock>
        <Splitter><SplitterGrip /></Splitter>
        <DocumentArea>
          <Viewport><Scene /></Viewport>
          <DocTabs>
            <DocTab>
              <svg width="14" height="14" viewBox="0 0 14 14" aria-hidden="true"><path d="M0 0H8V3H4V5.500H7V8.500H4V13H0Z" fill="#e8321a" /><circle cx="9" cy="8.500" r="4.200" fill="none" stroke="#12348c" strokeWidth="1.800" strokeDasharray="1.800 1.500" /><circle cx="9" cy="8.500" r="2.700" fill="#d6e0f5" stroke="#1c49a8" strokeWidth="2" /></svg>
              <DocName>Unnamed : 1*</DocName>
              <button aria-label="Close document"><svg width="14" height="14" viewBox="0 0 13 13"><path d="M2.500 2.500L10.500 10.500M10.500 2.500L2.500 10.500" stroke="#5c5c5c" strokeWidth="4" /></svg></button>
            </DocTab>
          </DocTabs>
        </DocumentArea>
      </Workspace>
      <StatusBar>183.48 x 101.62 mm<SizeGrip /></StatusBar>
    </Window>
  );
}
